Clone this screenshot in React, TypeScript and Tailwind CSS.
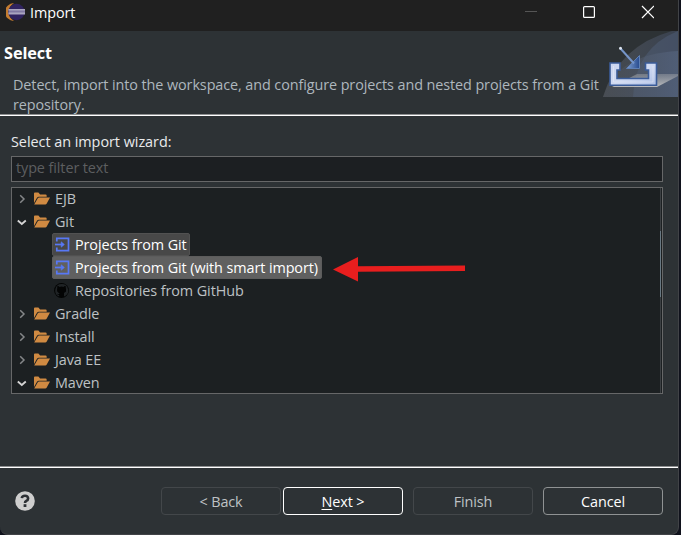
import React from "react";

function Folder() {
  return (
    <svg className="h-[13px] w-[17px] shrink-0" viewBox="0 0 17 13">
      <path d="M1 11V1.5Q1 .6 1.9.6H5.4l1.7 1.9h5.4q1.2 0 1.2 1.2v1H5.8Q4.7 4.7 4 5.7Z" fill="#d08a42" />
      <path d="M1.2 12.4 4.8 6.3q.4-.7 1.3-.7H17L13.6 11.7q-.4.7-1.3.7Z" fill="#d08a42" />
    </svg>
  );
}

function Chevron({ open }: { open?: boolean }) {
  return (
    <svg className="h-[10px] w-[10px] shrink-0" viewBox="0 0 10 10" fill="none">
      {open ? (
        <path d="M.8 3.5 4.8 7 8.8 3.5" stroke="#d4d4d4" strokeWidth="1.8" />
      ) : (
        <path d="M3.2 1.2 7 5 3.2 8.8" stroke="#858789" strokeWidth="1.5" />
      )}
    </svg>
  );
}

function ImportIcon() {
  return (
    <svg className="h-[15px] w-[16px] shrink-0" viewBox="0 0 16 15" fill="none" stroke="#5878f5" strokeWidth="1.7">
      <path d="M2.8 4.5V1.4H14.5V13.6H2.8V10.5" />
      <path d="M1 7.5H9" />
      <path d="M7.2 4.8V10.2L10.4 7.5Z" fill="#5878f5" strokeWidth=".6" />
    </svg>
  );
}

function GitHub() {
  return (
    <svg className="h-[15px] w-[15px] shrink-0" viewBox="0 0 15 15">
      <circle cx="7.5" cy="7.5" r="7.4" fill="#030404" />
      <path d="M7.5 1.1a6.4 6.4 0 0 0-2.1 12.4V12q-1.7.3-2.2-1.2 1.2.6 2.2.2l.3-1Q2.4 9.2 3.5 5.2L3.6 3.1 5.5 4q2-.5 4 0l1.9-.9.2 2.1q1.4 4-2.1 4.6.5.5.5 1.5v2.2A6.4 6.4 0 0 0 7.5 1.1Z" fill="#1f2325" />
      <path d="M5.7 10 Q2.4 9.2 3.5 5.2L3.6 3.1 5.5 4q2-.5 4 0l1.9-.9.2 2.1q1.4 4-2.1 4.6.5.5.5 1.5v2.2H5.4V12Z" fill="#030404" />
    </svg>
  );
}

function Group({ label, open }: { label: string; open?: boolean }) {
  return (
    <div className="flex h-[23px] shrink-0 items-center pl-[5px]">
      <Chevron open={open} />
      <span className="ml-[6px] flex"><Folder /></span>
      <span className="ml-[5px] text-[#bdc1c4]">{label}</span>
    </div>
  );
}

function ImportArt() {
  return (
    <svg className="h-[66px] w-[75px] shrink-0" viewBox="603 31 75 66">
      <defs>
        <linearGradient id="arc" x1="0" y1="0" x2="1" y2="0">
          <stop offset="0" stopColor="#464b50" />
          <stop offset="1" stopColor="#3a4250" />
        </linearGradient>
        <linearGradient id="lower" x1="0" y1="0" x2="1" y2="0">
          <stop offset="0" stopColor="#50555e" stopOpacity=".5" />
          <stop offset="1" stopColor="#596985" />
        </linearGradient>
        <linearGradient id="shine" x1="0" y1="0" x2="0" y2="1">
          <stop offset="0" stopColor="#a0a3a8" stopOpacity=".45" />
          <stop offset="1" stopColor="#c8c8c8" stopOpacity=".9" />
        </linearGradient>
        <linearGradient id="tray" x1="0" y1="0" x2="1" y2="1">
          <stop offset="0" stopColor="#cbd5ef" />
          <stop offset=".5" stopColor="#d0daf2" />
          <stop offset="1" stopColor="#aebfe5" />
        </linearGradient>
        <linearGradient id="head" x1="0" y1="0" x2="1" y2="0">
          <stop offset="0" stopColor="#7f9fd0" />
          <stop offset="1" stopColor="#274b8f" />
        </linearGradient>
      </defs>
      <path d="M603 97Q618 46 672 31H678V97Z" fill="url(#arc)" />
      <path d="M633 97Q635 48 678 31V97Z" fill="#53627d" opacity=".45" />
      <path d="M603 97Q617 54 678 51V97Z" fill="url(#lower)" opacity=".55" />
      <path d="M637 74H678V76L657 87H612Z" fill="url(#shine)" />
      <path d="M610 63H620V70H617V78.5H648.5V70H645.5V63H656.5V85.3H610Z" fill="url(#tray)" stroke="#3b5c99" strokeWidth="1.6" />
      <path d="M613.5 66V82H653V66" fill="none" stroke="#f4f6fd" strokeWidth="1" opacity=".4" />
      <path d="M639.5 55.5V68.5H626.5Z" fill="url(#head)" stroke="#5f80b5" />
      <path d="M620.5 48.5 634 63.5" stroke="#7595c9" strokeWidth="2" />
      <circle cx="620.5" cy="48.2" r="1.5" fill="#dce4ef" />
    </svg>
  );
}

function Button({ children, style }: { children: React.ReactNode; style: string }) {
  return (
    <button className={"flex h-[28px] w-[120px] items-center justify-center rounded-[4px] border pt-px " + style}>
      {children}
    </button>
  );
}

export default function App() {
  return (
    <div className="h-[535px] w-[681px] overflow-hidden bg-[#10121c] font-['Open_Sans','Noto_Sans',sans-serif] text-[14.4px] leading-[20px] tracking-[-0.09px]">
      <main className="flex h-[535px] w-[679px] flex-col rounded-b-[8px] border-r border-b border-[#414347] bg-[#2d3235]">
        <header className="flex h-[31px] shrink-0 items-center bg-[#202020] text-white">
          <svg className="mb-[7px] ml-[6px] h-[18px] w-[19px]" viewBox="0 0 19 18">
            <path d="M8 0A9 9 0 0 0 8 18Q2.5 14 2.5 9T8 0" fill="#c47c30" />
            <circle cx="10.5" cy="9" r="8.2" fill="#30235f" />
            <path d="M2.5 6H19V11.5H2.5Z" fill="#8178a2" />
            <path d="M2.5 6H19V7.5H2.5ZM2.5 9.5H19V11.2H2.5Z" fill="#aaa5bf" />
          </svg>
          <h1 className="mb-[5px] ml-[5px]">Import</h1>
          <svg className="mr-[24px] mb-[7px] ml-auto h-[14px] w-[130px]" viewBox="0 0 130 14" fill="none">
            <path d="M1 6.5H13" stroke="#555" />
            <rect x="59.6" y="1.6" width="10.8" height="10.8" rx="1" stroke="#fff" strokeWidth="1.2" />
            <path d="m118 1 12 12M130 1 118 13" stroke="#fff" strokeWidth="1.2" />
          </svg>
        </header>

        <section className="flex h-[85px] shrink-0 justify-between border-b border-white shadow-[inset_0_-1px_0_#8d8f90]">
          <div className="w-[603px]">
            <h2 className="mt-[12px] ml-[4px] text-[16.3px] leading-[21px] font-bold text-white">Select</h2>
            <p className="mt-[11px] ml-[13px] whitespace-nowrap text-[#aeb7be]">
              Detect, import into the workspace, and configure projects and nested projects from a Git<br />repository.
            </p>
          </div>
          <ImportArt />
        </section>

        <section className="flex h-[352px] shrink-0 flex-col border-b border-white pr-[15px] pl-[11px] shadow-[inset_0_-1px_0_#8d8f90]">
          <label className="mt-[16px] mb-[4px] tracking-[-0.03px] text-[#e9eaec]">Select an import wizard:</label>
          <div className="h-[26px] shrink-0 border border-[#666768] bg-[#1c1f22] pt-px pl-[4px] text-[#5c5e60]">type filter text</div>
          <div className="relative mt-[5px] h-[207px] shrink-0 overflow-hidden border border-[#666768] bg-[#1c2022]">
            <div className="-mt-px flex flex-col">
              <Group label="EJB" />
              <Group label="Git" open />
              <div className="ml-[40px] flex h-[23px] w-[138px] items-center rounded-[2px] border border-[#515151] bg-[#484848] pl-px text-white">
                <ImportIcon /><span className="ml-[5px]">Projects from Git</span>
              </div>
              <div className="ml-[40px] flex h-[23px] w-[270px] items-center rounded-[2px] border border-[#5c5c5c] bg-[#606060] pl-px text-white">
                <ImportIcon /><span className="ml-[5px] whitespace-nowrap">Projects from Git (with smart import)</span>
              </div>
              <div className="ml-[42px] flex h-[23px] items-center text-[#bdc1c4]">
                <GitHub /><span className="ml-[6px]">Repositories from GitHub</span>
              </div>
              <Group label="Gradle" />
              <Group label="Install" />
              <Group label="Java EE" />
              <Group label="Maven" open />
            </div>
            <svg className="absolute top-[68px] left-[320px] h-[26px] w-[136px]" viewBox="0 0 136 26">
              <path d="M1 13.5 26 1V10.3L133 9.5V15L26 15.7V25.5Z" fill="#e81e1e" />
            </svg>
            <div className="absolute top-0 right-px h-full w-px bg-[#3c4043]">
              <div className="mt-[43px] h-[66px] bg-[#697983]" />
            </div>
          </div>
        </section>

        <footer className="flex min-h-0 flex-1 items-start pt-[19px] pr-[15px] pl-[15px]">
          <svg className="mt-[4px] h-[20px] w-[20px]" viewBox="0 0 20 20">
            <circle cx="10" cy="10" r="9.8" fill="#cecece" />
            <path d="M6.8 7.2Q7.1 4.7 10 4.7T13.1 7.4Q13.1 9 11.3 9.9 10 10.6 10 12" fill="none" stroke="#2d3135" strokeWidth="2.6" />
            <rect x="8.6" y="13.2" width="2.8" height="2.8" fill="#2d3135" />
          </svg>
          <div className="ml-auto flex">
            <Button style="border-[#43474a] text-[#bfc2c5]">&lt; Back</Button>
            <span className="ml-[2px]"><Button style="border-white text-white"><span className="underline underline-offset-2">N</span>ext &gt;</Button></span>
            <span className="ml-[10px]"><Button style="border-[#43474a] text-[#bfc2c5]">Finish</Button></span>
            <span className="ml-[10px]"><Button style="border-[#8f9293] text-white">Cancel</Button></span>
          </div>
        </footer>
      </main>
    </div>
  );
}
